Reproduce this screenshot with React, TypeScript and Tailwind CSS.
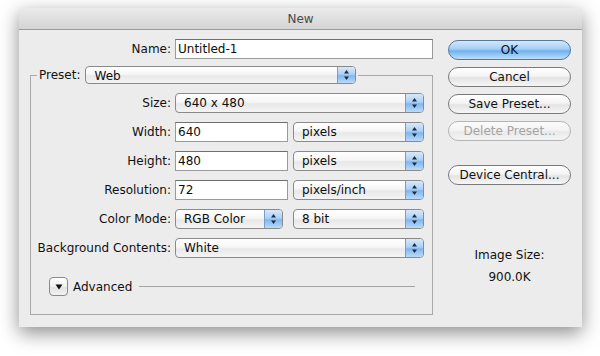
import React from "react";

const font = { fontFamily: '"DejaVu Sans", "Liberation Sans", sans-serif' };

const Arrows = () => (
  <svg width="7" height="12" viewBox="0 0 7 12">
    <path d="M3.5 1 L6 4.5 L1 4.5 Z" fill="#1d2b3c" />
    <path d="M3.5 11 L6 7.5 L1 7.5 Z" fill="#1d2b3c" />
  </svg>
);

const Popup = ({ value, className }: { value: string; className: string }) => (
  <div
    className={`flex h-5 overflow-hidden rounded-[4px] border border-[#8a8a8a] bg-[linear-gradient(#ffffff,#f6f6f6_45%,#e8e8e8_55%,#f4f4f4)] ${className}`}
  >
    <span className="flex-1 truncate pl-2 text-[12px] leading-[18px] text-[#0d0d0d]">{value}</span>
    <span className="flex w-[18px] items-center justify-center border-l border-[#7d9cc4] bg-[linear-gradient(#d7e9fb,#acd0f5_45%,#80b6ef_55%,#b9dbf9)]">
      <Arrows />
    </span>
  </div>
);

const Field = ({ value, className }: { value: string; className: string }) => (
  <div
    className={`h-5 border border-[#9a9a9a] border-t-[#6f6f6f] bg-white pl-[2px] text-[12px] leading-[18px] text-[#0d0d0d] ${className}`}
  >
    {value}
  </div>
);

const Row = ({ label, children }: { label: string; children: React.ReactNode }) => (
  <div className="flex h-5 items-center">
    <span className="w-[140px] shrink-0 text-right text-[12px] text-[#111]">{label}</span>
    <div className="ml-1 flex gap-[5px]">{children}</div>
  </div>
);

const Button = ({
  label,
  variant = "normal",
  className = "",
}: {
  label: string;
  variant?: "normal" | "default" | "disabled";
  className?: string;
}) => {
  const styles = {
    normal:
      "border-[#7a7a7a] text-[#111] bg-[linear-gradient(#ffffff,#f4f4f4_45%,#e4e4e4_55%,#f6f6f6)]",
    default:
      "border-[#56789f] text-[#0d0d0d] bg-[linear-gradient(#d3e8fb,#a3cef5_45%,#70b0ef_55%,#bde0fb)]",
    disabled:
      "border-[#b4b4b4] text-[#a4a4a4] bg-[linear-gradient(#fbfbfb,#f3f3f3_45%,#e9e9e9_55%,#f4f4f4)]",
  }[variant];
  return (
    <div
      className={`flex h-5 w-[123px] items-center justify-center rounded-full border text-[12px] ${styles} ${className}`}
    >
      {label}
    </div>
  );
};

export default function App() {
  return (
    <div className="h-[356px] w-[600px] overflow-hidden bg-white pl-[19px] pt-[8px]" style={font}>
      <div className="h-[319px] w-[563px] bg-[#ececec] shadow-[0_6px_18px_rgba(0,0,0,0.45)]">
        {/* title bar */}
        <div className="flex h-[22px] items-center justify-center border-b border-[#9a9a9a] bg-[linear-gradient(#ebebeb,#d4d4d4)] text-[12px] text-[#4a4a4a]">
          New
        </div>

        <div className="flex px-[11px] pt-[9px]">
          {/* left column */}
          <div className="w-[403px]">
            <div className="flex h-5 items-center">
              <span className="w-[141px] text-right text-[12px] text-[#111]">Name:</span>
              <Field value="Untitled-1" className="ml-1 w-[258px]" />
            </div>

            <fieldset className="mt-[7px] border border-[#a9a9a9] pb-[18px] pt-[9px]">
              <legend className="ml-[6px] flex items-center px-[2px]">
                <span className="text-[12px] text-[#111]">Preset:</span>
                <Popup value="Web" className="ml-[5px] h-[18px] w-[271px]" />
              </legend>

              <div className="flex flex-col gap-[9px]">
                <Row label="Size:">
                  <Popup value="640 x 480" className="w-[249px]" />
                </Row>
                <Row label="Width:">
                  <Field value="640" className="w-[113px]" />
                  <Popup value="pixels" className="w-[131px]" />
                </Row>
                <Row label="Height:">
                  <Field value="480" className="w-[113px]" />
                  <Popup value="pixels" className="w-[131px]" />
                </Row>
                <Row label="Resolution:">
                  <Field value="72" className="w-[113px]" />
                  <Popup value="pixels/inch" className="w-[131px]" />
                </Row>
                <Row label="Color Mode:">
                  <Popup value="RGB Color" className="w-[108px]" />
                  <Popup value="8 bit" className="ml-[5px] w-[131px]" />
                </Row>
                <Row label="Background Contents:">
                  <Popup value="White" className="w-[249px]" />
                </Row>
              </div>

              <div className="mt-[19px] flex items-center pl-[18px] pr-[17px]">
                <div className="flex h-[19px] w-[19px] items-center justify-center rounded-[4px] border border-[#8a8a8a] bg-[linear-gradient(#ffffff,#f0f0f0_50%,#e2e2e2_51%,#f2f2f2)]">
                  <svg width="8" height="6" viewBox="0 0 8 6">
                    <path d="M0.5 0.5 L7.5 0.5 L4 5.5 Z" fill="#111" />
                  </svg>
                </div>
                <span className="ml-[5px] text-[12px] text-[#111]">Advanced</span>
                <div className="ml-[7px] h-px flex-1 bg-[#a3a3a3]" />
              </div>
            </fieldset>
          </div>

          {/* right column */}
          <div className="ml-[15px] flex w-[123px] flex-col items-center">
            <Button label="OK" variant="default" className="mt-[1px]" />
            <Button label="Cancel" className="mt-[7px]" />
            <Button label="Save Preset..." className="mt-[7px]" />
            <Button label="Delete Preset..." variant="disabled" className="mt-[7px]" />
            <Button label="Device Central..." className="mt-[24px]" />
            <div className="mt-[62px] text-[12px] leading-4 text-[#111]">Image Size:</div>
            <div className="mt-[6px] text-[12px] leading-4 text-[#111]">900.0K</div>
          </div>
        </div>
      </div>
    </div>
  );
}
